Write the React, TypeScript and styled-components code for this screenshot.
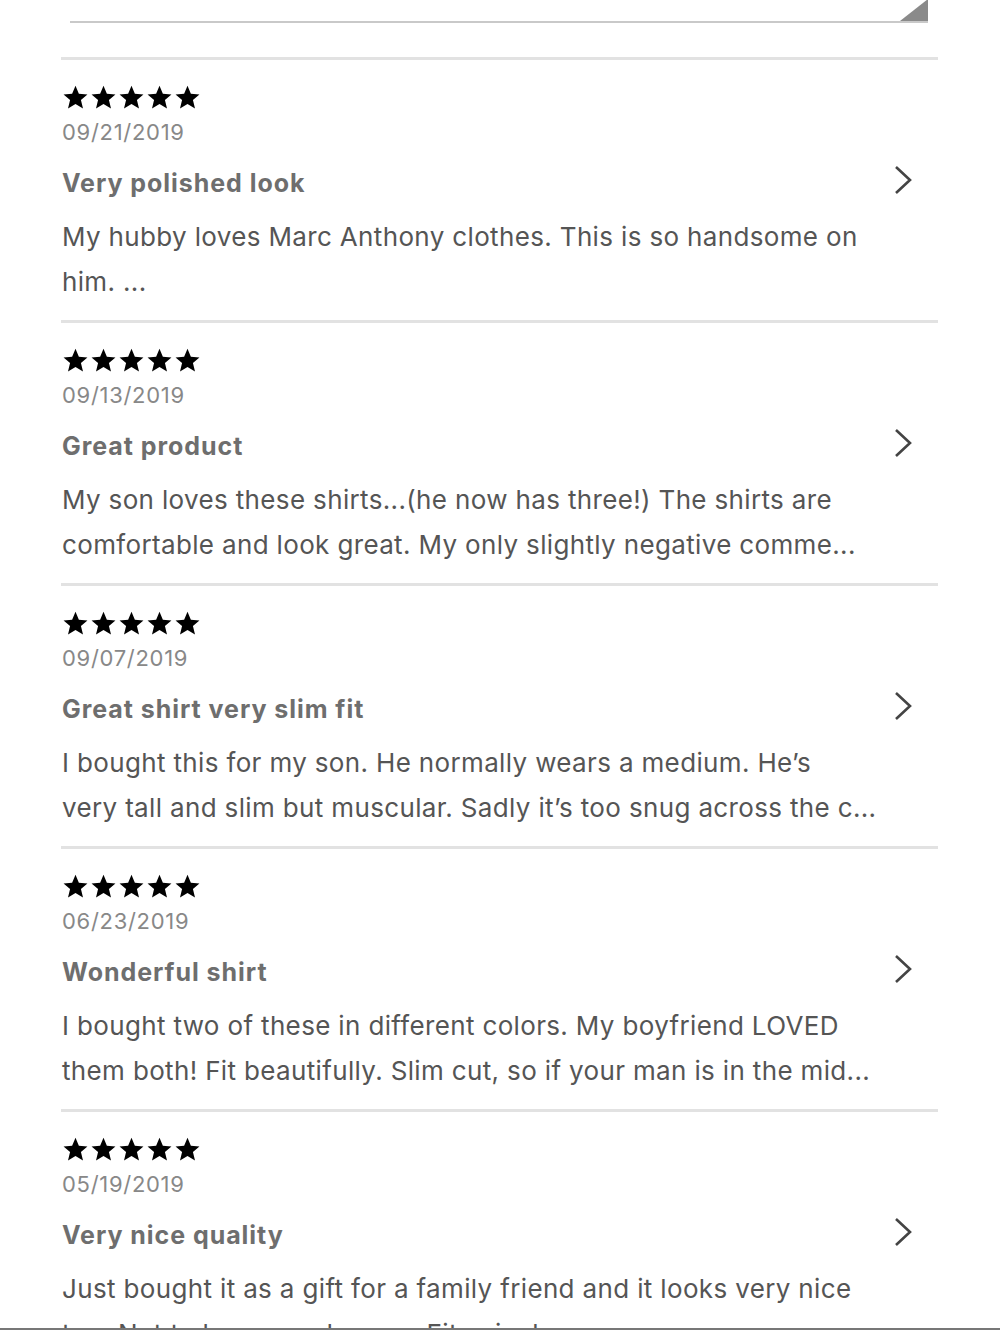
import React from "react"
import styled, { createGlobalStyle } from "styled-components"

type Review = {
    date: string
    title: string
    lines: string[]
}

const reviews: Review[] = [
    {
        date: "09/21/2019",
        title: "Very polished look",
        lines: ["My hubby loves Marc Anthony clothes. This is so handsome on", "him. ..."],
    },
    {
        date: "09/13/2019",
        title: "Great product",
        lines: [
            "My son loves these shirts...(he now has three!) The shirts are",
            "comfortable and look great. My only slightly negative comme...",
        ],
    },
    {
        date: "09/07/2019",
        title: "Great shirt very slim fit",
        lines: [
            "I bought this for my son. He normally wears a medium. He’s",
            "very tall and slim but muscular. Sadly it’s too snug across the c...",
        ],
    },
    {
        date: "06/23/2019",
        title: "Wonderful shirt",
        lines: [
            "I bought two of these in different colors. My boyfriend LOVED",
            "them both! Fit beautifully. Slim cut, so if your man is in the mid...",
        ],
    },
    {
        date: "05/19/2019",
        title: "Very nice quality",
        lines: [
            "Just bought it as a gift for a family friend and it looks very nice",
            "too. Not to heavy and warm. Fits nicely.",
        ],
    },
]

const GlobalStyle = createGlobalStyle`
body{
    margin:0;
    background:#fff;
    font-family:Inter,"Noto Sans",sans-serif;
}
`

const Page = styled.div`
height:1330px;
overflow:hidden;
padding:0 62px 0 61px;
box-sizing:border-box;
`

/* bottom edge of the comment box left over from the form above */
const BoxEdge = styled.div`
position:relative;
height:21px;
margin:0 10px 34px 9px;
border-bottom:2px solid #c9c9c9;
`
const ResizeGrip = styled.div`
position:absolute;
right:0;
bottom:0;
width:28px;
height:22px;
background:#8a8a8a;
clip-path:polygon(100% 0,100% 100%,0 100%);
`

const Item = styled.div`
display:flex;
align-items:flex-start;
border-top:3px solid #e2e2e2;
padding:25px 0 16px 1px;
`
const Content = styled.div`
flex:1;
min-width:0;
`
const Stars = styled.div`
display:flex;
gap:1px;
height:24px;
`
const DateText = styled.div`
margin-top:9px;
font-size:22px;
line-height:28px;
color:#888;
letter-spacing:0.7px;
`
const Title = styled.div`
margin-top:21px;
font-size:25px;
line-height:32px;
font-weight:700;
color:#6e6e6e;
letter-spacing:0.95px;
`
const Body = styled.div`
margin-top:15px;
font-size:26px;
line-height:45px;
color:#555;
letter-spacing:0.35px;
`
const Line = styled.div`
white-space:nowrap;
`
const Chevron = styled.div`
margin:80px 24px 0 0;
width:22px;
height:30px;
`
const BottomRule = styled.div`
position:fixed;
left:0;
right:0;
top:1328px;
height:2px;
background:#777;
`

const Star = () => (
    <svg width="27" height="25" viewBox="0 0 24 23">
        <path
            d="M12 0.8l3.1 7.3 7.9 0.6-6 5.2 1.9 7.7L12 17.4l-6.9 4.2L7 13.9 1 8.7l7.9-0.6z"
            fill="#000"
        />
    </svg>
)

const ChevronIcon = () => (
    <svg width="22" height="30" viewBox="0 0 22 30">
        <path d="M4 2l14 13L4 28" fill="none" stroke="#444" strokeWidth="2.6" />
    </svg>
)

const ReviewItem = ({ review }: { review: Review }) => (
    <Item>
        <Content>
            <Stars>
                {[0, 1, 2, 3, 4].map((i) => (
                    <Star key={i} />
                ))}
            </Stars>
            <DateText>{review.date}</DateText>
            <Title>{review.title}</Title>
            <Body>
                {review.lines.map((l, i) => (
                    <Line key={i}>{l}</Line>
                ))}
            </Body>
        </Content>
        <Chevron>
            <ChevronIcon />
        </Chevron>
    </Item>
)

export default function App() {
    return (
        <>
            <GlobalStyle />
            <Page>
                <BoxEdge>
                    <ResizeGrip />
                </BoxEdge>
                {reviews.map((r) => (
                    <ReviewItem key={r.date} review={r} />
                ))}
            </Page>
            <BottomRule />
        </>
    )
}
